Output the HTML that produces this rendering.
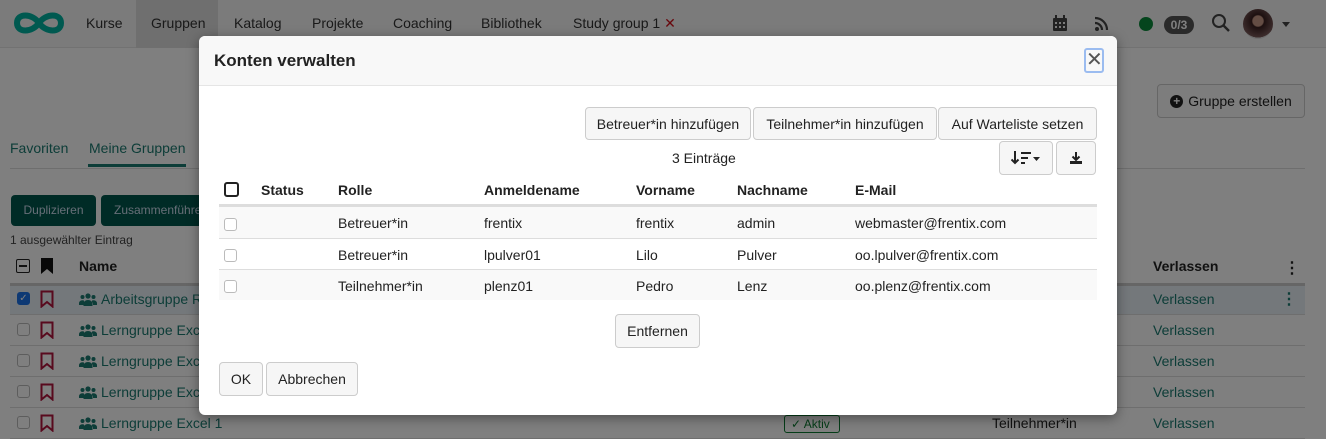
<!DOCTYPE html>
<html><head><meta charset="utf-8"><style>
*{box-sizing:border-box;margin:0;padding:0}
body{width:1326px;height:439px;overflow:hidden;position:relative;background:#fff;font-family:"Liberation Sans",Arial,sans-serif;color:#222;font-size:14px}
.a{position:absolute;white-space:nowrap}
.nav{position:absolute;left:0;top:0;width:1326px;height:48px;background:#f6f6f6;border-bottom:1px solid #e4e4e4}
.nav span{position:absolute;top:15px;font-size:14px;color:#333}
.btn{position:absolute;border:1px solid #ccc;border-radius:4px;background:#f6f6f6;font-size:14px;color:#222;display:flex;align-items:center;justify-content:center}
.link{color:#1a7a70}
.cb{position:absolute;width:13px;height:13px;border:1px solid #bbb;border-radius:3px;background:#fff}
.overlay{position:absolute;left:0;top:0;width:1326px;height:439px;background:rgba(0,0,0,.5)}
.modal{position:absolute;left:199px;top:36px;width:918px;height:379px;background:#fff;border-radius:6px;box-shadow:0 3px 12px rgba(0,0,0,.4);overflow:hidden}
.mh{position:absolute;left:0;top:0;width:918px;height:50px;background:#f8f8f8;border-bottom:1px solid #e5e5e5}
.th{position:absolute;top:146px;font-weight:bold;font-size:14px}
.row{position:absolute;left:20px;width:878px;border-bottom:1px solid #ddd}
.row span{position:absolute;top:8px;font-size:14px}
.pp{display:inline-block;vertical-align:-2px;margin-right:4px}
</style></head><body>
<svg width="0" height="0" style="position:absolute"><symbol id="pp" viewBox="0 0 18 13"><circle cx="9" cy="3" r="2.6" fill="#1a7a70"/><circle cx="3.5" cy="4" r="2" fill="#1a7a70"/><circle cx="14.5" cy="4" r="2" fill="#1a7a70"/><path d="M4.5 13v-2.5a4.5 3.5 0 0 1 9 0V13z M0 12v-2a3.5 3 0 0 1 5-2.5v4.5z M18 12v-2a3.5 3 0 0 0-5-2.5v4.5z" fill="#1a7a70"/></symbol></svg>
<div class="nav">
<svg class="a" style="left:12px;top:10px" width="54" height="26" viewBox="0 0 54 26"><path d="M27 13 C20 3,5 3,5 13 C5 23,20 23,27 13 C34 3,49 3,49 13 C49 23,34 23,27 13Z" fill="none" stroke="#00b3a0" stroke-width="6"/></svg>
<div class="a" style="left:136px;top:0;width:82px;height:48px;background:#dedede"></div>
<span style="left:86px">Kurse</span><span style="left:151px">Gruppen</span><span style="left:234px">Katalog</span><span style="left:312px">Projekte</span><span style="left:393px">Coaching</span><span style="left:481px">Bibliothek</span><span style="left:573px">Study group 1 <b style="color:#d0101a;font-weight:normal">✕</b></span>
<svg class="a" style="left:1052px;top:15px" width="16" height="17"><rect x="1" y="3" width="14" height="13" rx="1" fill="#444"/><rect x="3" y="0" width="2" height="4" fill="#444"/><rect x="11" y="0" width="2" height="4" fill="#444"/><g fill="#f6f6f6"><rect x="3" y="7" width="2" height="2"/><rect x="7" y="7" width="2" height="2"/><rect x="11" y="7" width="2" height="2"/><rect x="3" y="11" width="2" height="2"/><rect x="7" y="11" width="2" height="2"/><rect x="11" y="11" width="2" height="2"/></g></svg>
<svg class="a" style="left:1094px;top:15px" width="16" height="17"><circle cx="3" cy="14" r="2" fill="#444"/><path d="M1 8a7 7 0 0 1 7 7M1 3a12 12 0 0 1 12 12" fill="none" stroke="#444" stroke-width="2.2"/></svg>
<div class="a" style="left:1139px;top:17px;width:14px;height:14px;border-radius:50%;background:#0a8a3a"></div>
<div class="a" style="left:1164px;top:16px;width:30px;height:18px;border-radius:9px;background:#555;color:#fff;font-size:12px;font-weight:bold;text-align:center;line-height:18px">0/3</div>
<svg class="a" style="left:1211px;top:13px" width="20" height="20"><circle cx="8" cy="8" r="6" fill="none" stroke="#444" stroke-width="2"/><path d="M12.5 12.5 18 18" stroke="#444" stroke-width="2.4"/></svg>
<div class="a" style="left:1243px;top:9px;width:30px;height:30px;border-radius:50%;background:radial-gradient(circle at 50% 40%,#c99a88 0 22%,#3a2020 27%,#7a5a5a 70%,#ddd 71%)"></div>
<div class="a" style="left:1282px;top:22px;border:4px solid transparent;border-top:5px solid #444"></div>
</div>
<div class="btn" style="left:1157px;top:84px;width:148px;height:34px;background:#fafafa"><span style="display:inline-block;width:13px;height:13px;border-radius:50%;background:#222;color:#fff;font-size:12px;line-height:13px;text-align:center;margin-right:5px;font-weight:bold">+</span>Gruppe erstellen</div>
<div class="a" style="left:10px;top:140px;color:#1a7a70">Favoriten</div>
<div class="a" style="left:89px;top:140px;color:#1a7a70">Meine Gruppen</div>
<div class="a" style="left:88px;top:164px;width:98px;height:3px;background:#1a7a70"></div>
<div class="a" style="left:10px;top:168px;width:1295px;height:1px;background:#ddd"></div>
<div class="a" style="left:11px;top:195px;width:85px;height:31px;background:#00564c;border-radius:4px;color:#cde;font-size:12px;text-align:center;line-height:31px">Duplizieren</div>
<div class="a" style="left:101px;top:195px;width:120px;height:31px;background:#00564c;border-radius:4px;color:#cde;font-size:12px;padding-left:13px;line-height:31px">Zusammenführen</div>
<div class="a" style="left:10px;top:233px;font-size:12px;color:#444">1 ausgewählter Eintrag</div>
<div class="a" style="left:16px;top:259px;width:14px;height:14px;border:1.5px solid #222;border-radius:2px"><div style="margin:5px 2px;height:1.5px;background:#222"></div></div>
<svg class="a" style="left:40px;top:257px" width="14" height="18"><path d="M1 1h12v16l-6-5-6 5z" fill="#111"/></svg>
<div class="a" style="left:79px;top:258px;font-weight:bold">Name</div>
<div class="a" style="left:1153px;top:258px;font-weight:bold">Verlassen</div>
<div class="a" style="left:1284px;top:258px;font-weight:bold;font-size:16px">⋮</div>
<div class="a" style="left:10px;top:283px;width:1295px;height:3px;background:#ccc"></div>
<div class="a" style="left:10px;top:286px;width:1295px;height:28px;background:#e8f1f6"></div>
<div class="a" style="left:10px;top:314px;width:1295px;height:1px;background:#ddd"></div>
<div class="a" style="left:10px;top:345px;width:1295px;height:1px;background:#ddd"></div>
<div class="a" style="left:10px;top:376px;width:1295px;height:1px;background:#ddd"></div>
<div class="a" style="left:10px;top:407px;width:1295px;height:1px;background:#ddd"></div>
<div class="a" style="left:10px;top:438px;width:1295px;height:1px;background:#ddd"></div>
<div class="cb" style="left:17px;top:292px;background:#1a73e8;border-color:#1a73e8;color:#fff;font-size:10px;line-height:11px;text-align:center">✓</div>
<div class="cb" style="left:17px;top:323px"></div><div class="cb" style="left:17px;top:354px"></div><div class="cb" style="left:17px;top:385px"></div><div class="cb" style="left:17px;top:416px"></div>
<svg class="a" style="left:40px;top:290px" width="14" height="18"><path d="M1.5 1.5h11v15l-5.5-4.5-5.5 4.5z" fill="none" stroke="#b0143c" stroke-width="2"/></svg>
<svg class="a" style="left:40px;top:321px" width="14" height="18"><path d="M1.5 1.5h11v15l-5.5-4.5-5.5 4.5z" fill="none" stroke="#b0143c" stroke-width="2"/></svg>
<svg class="a" style="left:40px;top:352px" width="14" height="18"><path d="M1.5 1.5h11v15l-5.5-4.5-5.5 4.5z" fill="none" stroke="#b0143c" stroke-width="2"/></svg>
<svg class="a" style="left:40px;top:383px" width="14" height="18"><path d="M1.5 1.5h11v15l-5.5-4.5-5.5 4.5z" fill="none" stroke="#b0143c" stroke-width="2"/></svg>
<svg class="a" style="left:40px;top:414px" width="14" height="18"><path d="M1.5 1.5h11v15l-5.5-4.5-5.5 4.5z" fill="none" stroke="#b0143c" stroke-width="2"/></svg>
<div class="a link" style="left:79px;top:291px"><svg class="pp" width="18" height="13"><use href="#pp"/></svg>Arbeitsgruppe R</div>
<div class="a link" style="left:79px;top:322px"><svg class="pp" width="18" height="13"><use href="#pp"/></svg>Lerngruppe Excel</div>
<div class="a link" style="left:79px;top:353px"><svg class="pp" width="18" height="13"><use href="#pp"/></svg>Lerngruppe Excel</div>
<div class="a link" style="left:79px;top:384px"><svg class="pp" width="18" height="13"><use href="#pp"/></svg>Lerngruppe Excel</div>
<div class="a link" style="left:79px;top:415px"><svg class="pp" width="18" height="13"><use href="#pp"/></svg>Lerngruppe Excel 1</div>
<div class="a link" style="left:1153px;top:291px">Verlassen</div><div class="a link" style="left:1153px;top:322px">Verlassen</div><div class="a link" style="left:1153px;top:353px">Verlassen</div><div class="a link" style="left:1153px;top:384px">Verlassen</div><div class="a link" style="left:1153px;top:415px">Verlassen</div>
<div class="a" style="left:1281px;top:289px;font-weight:bold;font-size:16px;color:#1a7a70">⋮</div>
<div class="a" style="left:784px;top:415px;width:56px;height:18px;border:1px solid #0a7a30;border-radius:3px;color:#0a7a30;font-size:12px;padding-left:6px;line-height:16px">✓ Aktiv</div>
<div class="a" style="left:992px;top:415px">Teilnehmer*in</div>
<div class="overlay"></div>
<div class="modal">
<div class="mh"><div class="a" style="left:15px;top:15px;font-size:17px;font-weight:bold;color:#222">Konten verwalten</div>
<div class="a" style="left:885px;top:12px;width:20px;height:25px;border:2px solid #9bbcf0;border-radius:3px;color:#555;font-size:20px;text-align:center;line-height:20px">✕</div></div>
<div class="btn" style="left:386px;top:71px;width:166px;height:33px">Betreuer*in hinzufügen</div>
<div class="btn" style="left:554px;top:71px;width:184px;height:33px">Teilnehmer*in hinzufügen</div>
<div class="btn" style="left:739px;top:71px;width:159px;height:33px">Auf Warteliste setzen</div>
<div class="a" style="left:473px;top:114px">3 Einträge</div>
<div class="btn" style="left:800px;top:105px;width:54px;height:34px"><svg width="30" height="16"><path d="M4 1v12M0.5 9.5 4 13l3.5-3.5" fill="none" stroke="#222" stroke-width="2"/><rect x="10" y="2" width="10" height="2" fill="#222"/><rect x="10" y="7" width="7" height="2" fill="#222"/><rect x="10" y="12" width="4" height="2" fill="#222"/><path d="M22 7h7l-3.5 4z" fill="#222"/></svg></div>
<div class="btn" style="left:857px;top:105px;width:40px;height:34px"><svg width="14" height="14"><path d="M7 1v8M3.5 5.5 7 9l3.5-3.5" fill="none" stroke="#222" stroke-width="2"/><rect x="1" y="10" width="12" height="3" fill="#222"/></svg></div>
<div class="a" style="left:25px;top:146px;width:15px;height:15px;border:2px solid #222;border-radius:3px"></div>
<div class="th" style="left:62px">Status</div><div class="th" style="left:139px">Rolle</div><div class="th" style="left:285px">Anmeldename</div><div class="th" style="left:437px">Vorname</div><div class="th" style="left:538px">Nachname</div><div class="th" style="left:656px">E-Mail</div>
<div class="a" style="left:20px;top:168px;width:878px;height:3px;background:#ddd"></div>
<div class="row" style="top:171px;height:32px;background:#f9f9f9"><div class="cb" style="left:5px;top:11px"></div><span style="left:119px">Betreuer*in</span><span style="left:265px">frentix</span><span style="left:417px">frentix</span><span style="left:518px">admin</span><span style="left:636px">webmaster@frentix.com</span></div>
<div class="row" style="top:203px;height:31px"><div class="cb" style="left:5px;top:10px"></div><span style="left:119px">Betreuer*in</span><span style="left:265px">lpulver01</span><span style="left:417px">Lilo</span><span style="left:518px">Pulver</span><span style="left:636px">oo.lpulver@frentix.com</span></div>
<div class="row" style="top:234px;height:30px;background:#f9f9f9;border:none"><div class="cb" style="left:5px;top:10px"></div><span style="left:119px">Teilnehmer*in</span><span style="left:265px">plenz01</span><span style="left:417px">Pedro</span><span style="left:518px">Lenz</span><span style="left:636px">oo.plenz@frentix.com</span></div>
<div class="btn" style="left:416px;top:278px;width:85px;height:34px">Entfernen</div>
<div class="btn" style="left:20px;top:326px;width:44px;height:34px">OK</div>
<div class="btn" style="left:67px;top:326px;width:92px;height:34px">Abbrechen</div>
</div>
</body></html>
